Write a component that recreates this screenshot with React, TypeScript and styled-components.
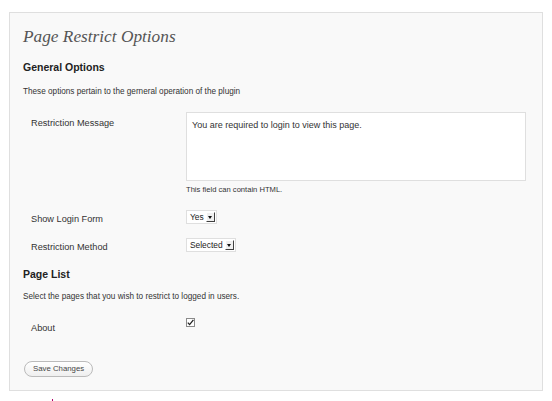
import React from "react";
import styled, { createGlobalStyle } from "styled-components";

const GlobalStyle = createGlobalStyle`
  html, body {
    margin: 0;
    padding: 0;
    background: #ffffff;
  }
  body {
    font-family: "Liberation Sans", Arial, sans-serif;
    color: #333333;
  }
`;

const Page = styled.div`
  padding: 12px 0 0 9px;
`;

const Panel = styled.div`
  box-sizing: border-box;
  width: 534px;
  height: 379px;
  border: 1px solid #dfdfdf;
  background: #f9f9f9;
  padding: 11px 13px 0 13px;
`;

const Title = styled.h2`
  margin: 0;
  font-family: "Liberation Serif", "Times New Roman", serif;
  font-style: italic;
  font-weight: normal;
  font-size: 17.3px;
  line-height: 25px;
  color: #555555;
`;

const SectionTitle = styled.h3<{ $top: number }>`
  margin: ${(p) => p.$top}px 0 0;
  font-size: 10.5px;
  line-height: 14px;
  font-weight: bold;
  color: #222222;
`;

const Description = styled.p<{ $top: number }>`
  margin: ${(p) => p.$top}px 0 0;
  font-size: 8.2px;
  line-height: 12px;
  color: #333333;
`;

const Row = styled.div<{ $top: number }>`
  display: grid;
  grid-template-columns: 155px 1fr;
  margin-top: ${(p) => p.$top}px;
  padding-left: 8px;
`;

const Label = styled.div<{ $offset: number }>`
  padding-top: ${(p) => p.$offset}px;
  font-size: 9.2px;
  line-height: 12px;
  color: #333333;
`;

const Field = styled.div`
  display: flex;
  flex-direction: column;
  align-items: flex-start;
`;

const TextArea = styled.div`
  box-sizing: border-box;
  width: 340px;
  height: 69px;
  border: 1px solid #dfdfdf;
  background: #ffffff;
  padding: 6px 5px;
  font-size: 9px;
  line-height: 12px;
  color: #333333;
`;

const Help = styled.span`
  margin-top: 3px;
  font-size: 7.6px;
  line-height: 12px;
  color: #333333;
`;

const Select = styled.div`
  box-sizing: border-box;
  display: inline-flex;
  align-items: center;
  gap: 2px;
  height: 14px;
  border: 1px solid #dfdfdf;
  background: #ffffff;
  padding: 0 1px 0 3px;
  font-size: 8.4px;
  color: #222222;
`;

const Arrow = styled.span`
  box-sizing: border-box;
  display: flex;
  align-items: center;
  justify-content: center;
  width: 9px;
  height: 10px;
  background: #f0f0f0;
  border-right: 1px solid #404040;
  border-bottom: 1px solid #404040;
  border-top: 1px solid #ffffff;
  border-left: 1px solid #ffffff;

  &::after {
    content: "";
    border-left: 2.5px solid transparent;
    border-right: 2.5px solid transparent;
    border-top: 3px solid #111111;
  }
`;

const Check = styled.span`
  box-sizing: border-box;
  display: flex;
  align-items: center;
  justify-content: center;
  width: 9px;
  height: 9px;
  margin-top: 2px;
  border: 1px solid #8a8a8a;
  background: #ffffff;
`;

const Button = styled.button`
  margin: 27px 0 0 1px;
  height: 16px;
  padding: 0 8px;
  border: 1px solid #bbbbbb;
  border-radius: 10px;
  background: linear-gradient(#ffffff, #efefef);
  font-family: "Liberation Sans", Arial, sans-serif;
  font-size: 7.8px;
  color: #464646;
  line-height: 12px;
`;

const Dot = styled.div`
  width: 1px;
  height: 2px;
  margin: 8px 0 0 43px;
  background: #b0006a;
`;

export default function App() {
  return (
    <>
      <GlobalStyle />
      <Page>
        <Panel>
          <Title>Page Restrict Options</Title>
          <SectionTitle $top={11}>General Options</SectionTitle>
          <Description $top={12}>These options pertain to the gerneral operation of the plugin</Description>

          <Row $top={14}>
            <Label $offset={5}>Restriction Message</Label>
            <Field>
              <TextArea>You are required to login to view this page.</TextArea>
              <Help>This field can contain HTML.</Help>
            </Field>
          </Row>

          <Row $top={14}>
            <Label $offset={3}>Show Login Form</Label>
            <Field>
              <Select>
                Yes
                <Arrow />
              </Select>
            </Field>
          </Row>

          <Row $top={13}>
            <Label $offset={3}>Restriction Method</Label>
            <Field>
              <Select>
                Selected
                <Arrow />
              </Select>
            </Field>
          </Row>

          <SectionTitle $top={14}>Page List</SectionTitle>
          <Description $top={10}>Select the pages that you wish to restrict to logged in users.</Description>

          <Row $top={13}>
            <Label $offset={6}>About</Label>
            <Field>
              <Check>
                <svg width="7" height="7" viewBox="0 0 7 7">
                  <path d="M0.8 3.6 L2.6 5.6 L6.4 0.8" fill="none" stroke="#222" strokeWidth="1.3" />
                </svg>
              </Check>
            </Field>
          </Row>

          <Button type="button">Save Changes</Button>
        </Panel>
        <Dot />
      </Page>
    </>
  );
}
